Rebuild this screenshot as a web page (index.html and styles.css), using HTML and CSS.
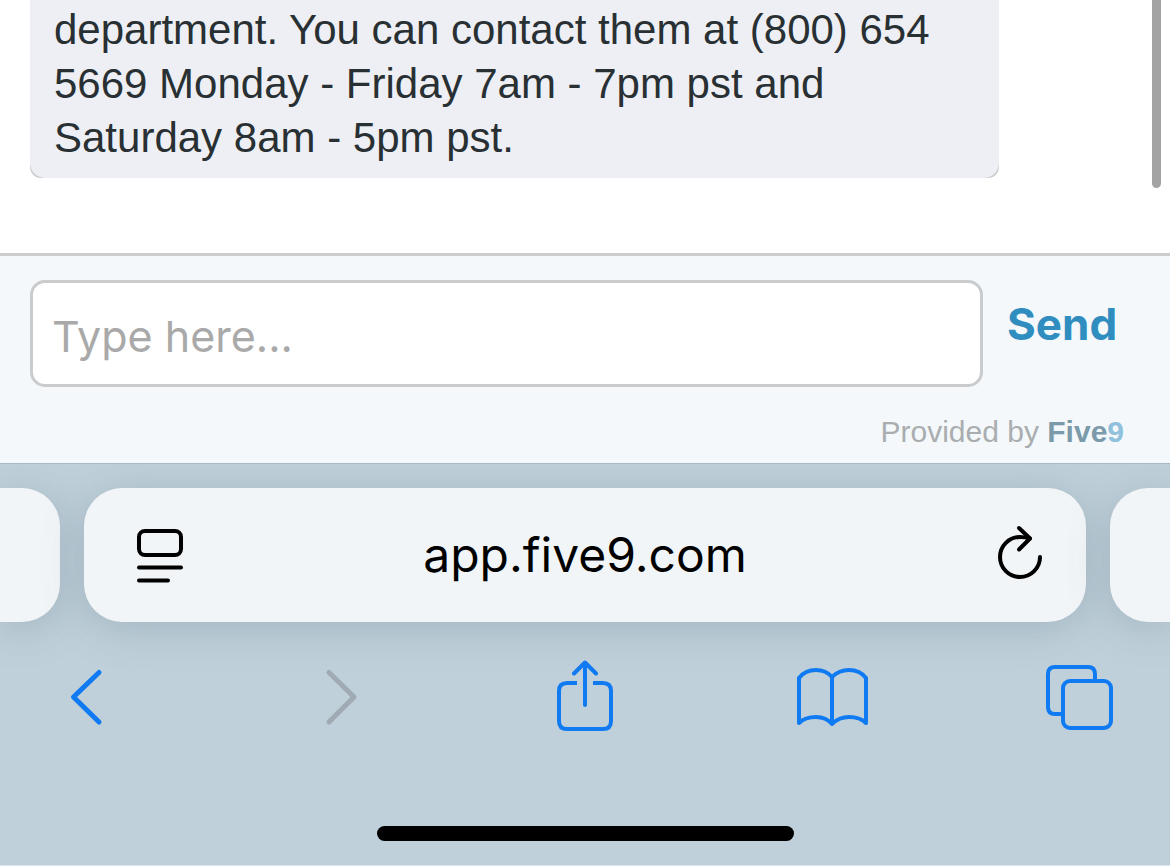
FILE: index.html
```
<!DOCTYPE html>
<html lang="en">
<head>
    <meta charset="UTF-8">
    <meta name="viewport" content="width=device-width, initial-scale=1.0">
    <title>Five9 Chat</title>
    <link rel="stylesheet" href="styles.css">
</head>
<body>

    <main class="messages">
        <div class="bubble-edge">
            <p class="bubble">department. You can contact them at (800) 654 5669 Monday - Friday 7am - 7pm pst and Saturday 8am - 5pm pst.</p>
        </div>
        <div class="scroll-thumb"></div>
    </main>

    <section class="composer">
        <form class="composer-row">
            <input class="message-input" type="text" placeholder="Type here..." aria-label="Message">
            <button class="send-button" type="button">Send</button>
        </form>
        <p class="provider">Provided by <a class="brand" href="#">Five<span class="brand-nine">9</span></a></p>
    </section>

    <footer class="browser-bar">
        <div class="tab-strip">
            <div class="tab tab-left"></div>
            <div class="tab tab-current">
                <button class="icon-button" type="button" aria-label="Page settings">
                    <svg width="56" height="56" viewBox="-10 0 56 56" fill="none" stroke="#000" stroke-width="4" stroke-linecap="round">
                        <rect x="2" y="4" width="42" height="24" rx="6"/>
                        <path d="M2 40.5H44M2 53.5H31"/>
                    </svg>
                </button>
                <span class="address">app.five9.com</span>
                <button class="icon-button" type="button" aria-label="Reload">
                    <svg width="56" height="56" viewBox="-10 0 56 56" overflow="visible" fill="none" stroke="#000" stroke-width="4" stroke-linecap="round" stroke-linejoin="round">
                        <path d="M43 30A20 20 0 1 1 23 10Q28 10 33 11.5"/>
                        <path d="M22 1L33 11.5L22 22.5"/>
                    </svg>
                </button>
            </div>
            <div class="tab tab-right"></div>
        </div>

        <nav class="toolbar">
            <button class="icon-button" type="button" aria-label="Back">
                <svg width="72" height="72" viewBox="0 0 72 72">
                    <path stroke-width="5" d="M46 12.5L20.5 37L46 62"/>
                </svg>
            </button>
            <button class="icon-button" type="button" aria-label="Forward" disabled>
                <svg width="72" height="72" viewBox="0 0 72 72">
                    <path stroke-width="5" d="M28 12.5L53 37L28 62"/>
                </svg>
            </button>
            <button class="icon-button" type="button" aria-label="Share">
                <svg width="72" height="72" viewBox="0 0 72 72">
                    <path d="M36 3V45M25 13.5L36 2.5L47 13.5"/>
                    <path stroke-linecap="butt" d="M28 23H18Q10 23 10 31V61Q10 69 18 69H54Q62 69 62 61V31Q62 23 54 23H44"/>
                </svg>
            </button>
            <button class="icon-button" type="button" aria-label="Bookmarks">
                <svg width="72" height="72" viewBox="0 0 72 72">
                    <path d="M35 17Q29 10 19 10Q8 10 2 18V63Q8 57 19 57Q29 57 35 64Q42 57 52 57Q63 57 69 63V18Q63 10 52 10Q42 10 35 17V64"/>
                </svg>
            </button>
            <button class="icon-button" type="button" aria-label="Tabs">
                <svg width="72" height="72" viewBox="0 0 72 72">
                    <rect x="18" y="21" width="48" height="47" rx="7"/>
                    <path stroke-linecap="butt" d="M50 21V14Q50 7 43 7H10Q3 7 3 14V47Q3 54 10 54H18"/>
                </svg>
            </button>
        </nav>

        <div class="home-indicator"></div>
    </footer>

</body>
</html>
```
FILE: styles.css
```
* {
    box-sizing: border-box;
}

body {
    display: flex;
    flex-direction: column;
    min-height: 100vh;
    margin: 0;
    background-color: #fff;
    font-family: "Liberation Sans", Arial, sans-serif;
}

button {
    padding: 0;
    border: none;
    background: none;
    cursor: pointer;
}

/* Conversation */
.messages {
    position: relative;
    flex: 1;
    padding: 0 171px 75px 30px;
    overflow: hidden;
}

.bubble-edge {
    border-radius: 0 0 11px 11px;
    background-color: #c8cacc;
}

.bubble {
    margin: 0;
    padding: 3px 24px 13px;
    border-radius: 0 0 15px 15px;
    background-color: #edeff4;
    color: #293033;
    font-size: 42px;
    line-height: 54px;
}

.scroll-thumb {
    position: absolute;
    top: 0;
    right: 9px;
    width: 9px;
    height: 188px;
    border-radius: 0 0 5px 5px;
    background-color: #a3a3a3;
}

/* Message entry */
.composer {
    padding: 24px 46px 13px 30px;
    border-top: 3px solid #cbcdce;
    background-color: #f4f8fa;
}

.composer-row {
    display: flex;
    align-items: flex-start;
    gap: 24px;
}

.message-input {
    flex: 1;
    min-width: 0;
    height: 107px;
    padding: 4px 19px 0;
    border: 3px solid #c9cbcd;
    border-radius: 15px;
    background-color: #fff;
    color: #293033;
    font-family: Inter, sans-serif;
    font-size: 43px;
}

.message-input::placeholder {
    color: #a9a9a9;
    opacity: 1;
}

.send-button {
    flex: 0 0 117px;
    color: #2f8dc0;
    font-family: Inter, sans-serif;
    font-size: 44px;
    font-weight: 700;
    line-height: 88px;
    text-align: left;
}

.provider {
    margin: 27px 0 0;
    color: #a9adaf;
    font-size: 30px;
    line-height: 36px;
    text-align: right;
}

.brand {
    color: #7b9aaa;
    font-weight: bold;
    text-decoration: none;
}

.brand-nine {
    color: #8fc1dd;
}

/* Browser controls */
.browser-bar {
    padding: 24px 0;
    border-top: 1px solid #a5b8c4;
    border-bottom: 1px solid #dbe5ed;
    background-color: #bfd0da;
    overflow: hidden;
}

.tab-strip {
    display: grid;
    grid-template-columns: 60px 1fr 60px;
    gap: 24px;
}

.tab {
    height: 134px;
    border-radius: 38px;
    background-color: #f2f5f7;
    box-shadow: 0 6px 40px rgba(80, 105, 120, 0.26);
}

.tab-left {
    border-radius: 0 38px 38px 0;
}

.tab-right {
    border-radius: 38px 0 0 38px;
}

.tab-current {
    display: flex;
    align-items: center;
    justify-content: space-between;
    padding: 0 43px;
}

.address {
    color: #000;
    font-family: Inter, sans-serif;
    font-size: 48px;
    line-height: 60px;
}

.icon-button svg {
    display: block;
}

.toolbar {
    display: flex;
    justify-content: space-between;
    margin-top: 38px;
    padding: 0 53px;
}

.toolbar svg {
    fill: none;
    stroke: #0f7af2;
    stroke-width: 4;
    stroke-linecap: round;
    stroke-linejoin: round;
}

.toolbar .icon-button:disabled svg {
    stroke: #9faab2;
}

.home-indicator {
    width: 417px;
    height: 15px;
    margin: 94px auto 0;
    border-radius: 8px;
    background-color: #000;
}
```
